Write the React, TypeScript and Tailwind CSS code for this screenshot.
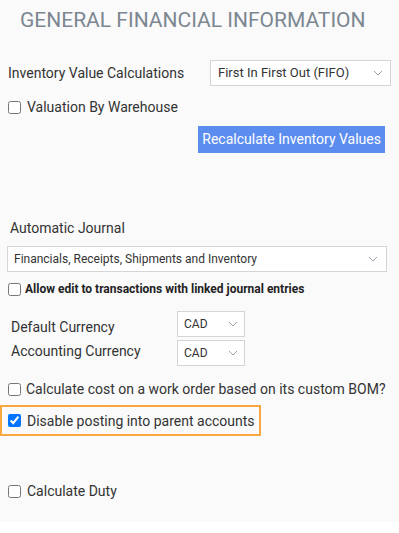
import React from "react";

const Chevron = () => (
  <svg width="10" height="6" viewBox="0 0 10 6" fill="none" className="shrink-0">
    <path d="M1 1l4 4 4-4" stroke="#9aa3ab" strokeWidth="1" />
  </svg>
);

const Select = ({ value, className, textClass }: { value: string; className: string; textClass: string }) => (
  <div className={`flex items-center justify-between border border-[#d5d5d5] bg-white ${className}`}>
    <span className={`text-[#333] ${textClass}`}>{value}</span>
    <Chevron />
  </div>
);

const Check = ({ label, checked = false, bold = false, gap = "gap-[6px]" }: { label: string; checked?: boolean; bold?: boolean; gap?: string }) => (
  <label className={`flex h-4 items-center ${gap}`}>
    <input type="checkbox" defaultChecked={checked} className="m-0 h-[13px] w-[13px] accent-[#0075ff]" />
    <span className={bold ? "text-[12px] leading-4 font-bold text-[#222]" : "text-[14px] leading-4 text-[#333]"}>{label}</span>
  </label>
);

export default function App() {
  return (
    <div className="w-[399px] bg-white font-['Roboto',sans-serif]">
      <div className="h-[522px] bg-[#fafafa] px-2">
        <h1 className="pl-3 pt-[7px] text-[21px] leading-[26px] text-[#7c8791]">GENERAL FINANCIAL INFORMATION</h1>

        <div className="mt-[27px] flex items-center justify-between">
          <span className="text-[14px] text-[#333]">Inventory Value Calculations</span>
          <Select value="First In First Out (FIFO)" className="h-[26px] w-[181px] pl-[7px] pr-[7px]" textClass="text-[13px]" />
        </div>

        <div className="mt-[13px]">
          <Check label="Valuation By Warehouse" gap="gap-[6px]" />
        </div>

        <div className="mt-[11px] flex justify-end pr-[6px]">
          <button className="h-[27px] bg-[#5b8def] px-1 text-[14px] text-white">Recalculate Inventory Values</button>
        </div>

        <div className="mt-[67px] pl-[2px] text-[14px] leading-4 text-[#333]">Automatic Journal</div>

        <Select
          value="Financials, Receipts, Shipments and Inventory"
          className="mt-[10px] h-[26px] w-[380px] -ml-px pl-[6px] pr-[8px]"
          textClass="text-[12px]"
        />

        <div className="mt-[9px]">
          <Check label="Allow edit to transactions with linked journal entries" bold gap="gap-[4px]" />
        </div>

        <div className="mt-[14px] grid grid-cols-[166px_auto] items-center gap-y-[3px] pl-[3px]">
          <span className="pt-[6px] text-[14px] leading-4 text-[#333]">Default Currency</span>
          <Select value="CAD" className="h-[26px] w-[68px] pl-[6px] pr-[6px]" textClass="text-[12px]" />
          <span className="pb-[4px] text-[14px] leading-4 text-[#333]">Accounting Currency</span>
          <Select value="CAD" className="h-[26px] w-[68px] pl-[6px] pr-[6px]" textClass="text-[12px]" />
        </div>

        <div className="mt-[15px]">
          <Check label="Calculate cost on a work order based on its custom BOM?" gap="gap-[5px]" />
        </div>

        <div className="-ml-2 mt-[8px] flex h-[31px] w-[261px] items-center border-2 border-[#f7a840] pl-[6px]">
          <Check label="Disable posting into parent accounts" checked gap="gap-[6px]" />
        </div>

        <div className="mt-[47px]">
          <Check label="Calculate Duty" gap="gap-[6px]" />
        </div>
      </div>
    </div>
  );
}
